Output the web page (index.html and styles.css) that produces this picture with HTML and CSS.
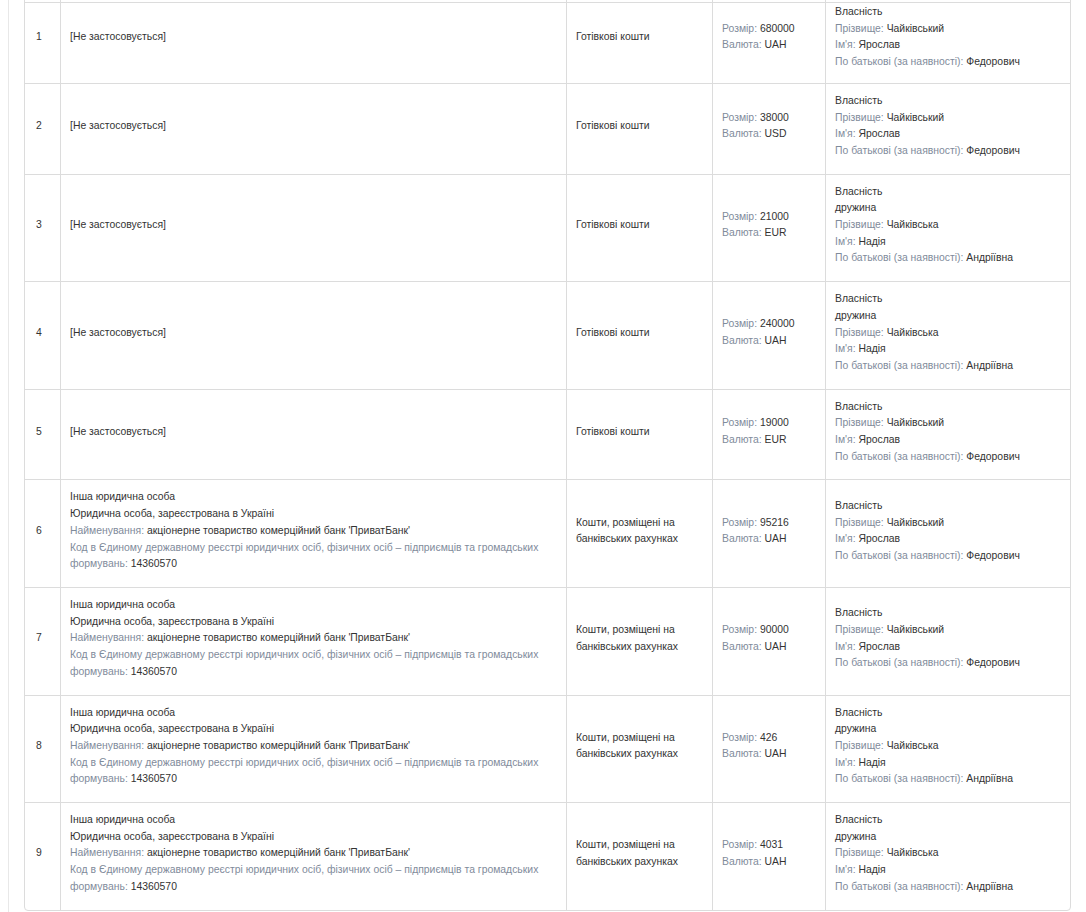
FILE: index.html
```html
<!DOCTYPE html>
<html lang="uk">
<head>
<meta charset="utf-8">
<title>Активи</title>
<link rel="stylesheet" href="styles.css">
</head>
<body>
<div class="card">
<table class="grid">
<colgroup>
<col class="c-num"><col class="c-org"><col class="c-type"><col class="c-sum"><col class="c-own">
</colgroup>
<thead>
<tr><th></th><th></th><th></th><th></th><th></th></tr>
</thead>
<tbody>
<tr class="first">
<td class="num">1</td>
<td>[Не застосовується]</td>
<td>Готівкові кошти</td>
<td><div><span class="lbl">Розмір:</span> 680000</div><div><span class="lbl">Валюта:</span> UAH</div></td>
<td><div>Власність</div><div><span class="lbl">Прізвище:</span> Чайківський</div><div><span class="lbl">Ім'я:</span> Ярослав</div><div><span class="lbl">По батькові (за наявності):</span> Федорович</div></td>
</tr>
<tr>
<td class="num">2</td>
<td>[Не застосовується]</td>
<td>Готівкові кошти</td>
<td><div><span class="lbl">Розмір:</span> 38000</div><div><span class="lbl">Валюта:</span> USD</div></td>
<td><div>Власність</div><div><span class="lbl">Прізвище:</span> Чайківський</div><div><span class="lbl">Ім'я:</span> Ярослав</div><div><span class="lbl">По батькові (за наявності):</span> Федорович</div></td>
</tr>
<tr>
<td class="num">3</td>
<td>[Не застосовується]</td>
<td>Готівкові кошти</td>
<td><div><span class="lbl">Розмір:</span> 21000</div><div><span class="lbl">Валюта:</span> EUR</div></td>
<td><div>Власність</div><div>дружина</div><div><span class="lbl">Прізвище:</span> Чайківська</div><div><span class="lbl">Ім'я:</span> Надія</div><div><span class="lbl">По батькові (за наявності):</span> Андріївна</div></td>
</tr>
<tr>
<td class="num">4</td>
<td>[Не застосовується]</td>
<td>Готівкові кошти</td>
<td><div><span class="lbl">Розмір:</span> 240000</div><div><span class="lbl">Валюта:</span> UAH</div></td>
<td><div>Власність</div><div>дружина</div><div><span class="lbl">Прізвище:</span> Чайківська</div><div><span class="lbl">Ім'я:</span> Надія</div><div><span class="lbl">По батькові (за наявності):</span> Андріївна</div></td>
</tr>
<tr>
<td class="num">5</td>
<td>[Не застосовується]</td>
<td>Готівкові кошти</td>
<td><div><span class="lbl">Розмір:</span> 19000</div><div><span class="lbl">Валюта:</span> EUR</div></td>
<td><div>Власність</div><div><span class="lbl">Прізвище:</span> Чайківський</div><div><span class="lbl">Ім'я:</span> Ярослав</div><div><span class="lbl">По батькові (за наявності):</span> Федорович</div></td>
</tr>
<tr>
<td class="num">6</td>
<td><div>Інша юридична особа</div><div>Юридична особа, зареєстрована в Україні</div><div><span class="lbl">Найменування:</span> акціонерне товариство комерційний банк 'ПриватБанк'</div><div><span class="lbl">Код в Єдиному державному реєстрі юридичних осіб, фізичних осіб – підприємців та громадських формувань:</span> 14360570</div></td>
<td>Кошти, розміщені на банківських рахунках</td>
<td><div><span class="lbl">Розмір:</span> 95216</div><div><span class="lbl">Валюта:</span> UAH</div></td>
<td><div>Власність</div><div><span class="lbl">Прізвище:</span> Чайківський</div><div><span class="lbl">Ім'я:</span> Ярослав</div><div><span class="lbl">По батькові (за наявності):</span> Федорович</div></td>
</tr>
<tr>
<td class="num">7</td>
<td><div>Інша юридична особа</div><div>Юридична особа, зареєстрована в Україні</div><div><span class="lbl">Найменування:</span> акціонерне товариство комерційний банк 'ПриватБанк'</div><div><span class="lbl">Код в Єдиному державному реєстрі юридичних осіб, фізичних осіб – підприємців та громадських формувань:</span> 14360570</div></td>
<td>Кошти, розміщені на банківських рахунках</td>
<td><div><span class="lbl">Розмір:</span> 90000</div><div><span class="lbl">Валюта:</span> UAH</div></td>
<td><div>Власність</div><div><span class="lbl">Прізвище:</span> Чайківський</div><div><span class="lbl">Ім'я:</span> Ярослав</div><div><span class="lbl">По батькові (за наявності):</span> Федорович</div></td>
</tr>
<tr>
<td class="num">8</td>
<td><div>Інша юридична особа</div><div>Юридична особа, зареєстрована в Україні</div><div><span class="lbl">Найменування:</span> акціонерне товариство комерційний банк 'ПриватБанк'</div><div><span class="lbl">Код в Єдиному державному реєстрі юридичних осіб, фізичних осіб – підприємців та громадських формувань:</span> 14360570</div></td>
<td>Кошти, розміщені на банківських рахунках</td>
<td><div><span class="lbl">Розмір:</span> 426</div><div><span class="lbl">Валюта:</span> UAH</div></td>
<td><div>Власність</div><div>дружина</div><div><span class="lbl">Прізвище:</span> Чайківська</div><div><span class="lbl">Ім'я:</span> Надія</div><div><span class="lbl">По батькові (за наявності):</span> Андріївна</div></td>
</tr>
<tr>
<td class="num">9</td>
<td><div>Інша юридична особа</div><div>Юридична особа, зареєстрована в Україні</div><div><span class="lbl">Найменування:</span> акціонерне товариство комерційний банк 'ПриватБанк'</div><div><span class="lbl">Код в Єдиному державному реєстрі юридичних осіб, фізичних осіб – підприємців та громадських формувань:</span> 14360570</div></td>
<td>Кошти, розміщені на банківських рахунках</td>
<td><div><span class="lbl">Розмір:</span> 4031</div><div><span class="lbl">Валюта:</span> UAH</div></td>
<td><div>Власність</div><div>дружина</div><div><span class="lbl">Прізвище:</span> Чайківська</div><div><span class="lbl">Ім'я:</span> Надія</div><div><span class="lbl">По батькові (за наявності):</span> Андріївна</div></td>
</tr>
</tbody>
</table>
</div>
</body>
</html>
```
FILE: styles.css
```css
html, body {
  margin: 0;
  padding: 0;
  background: #fff;
  overflow: hidden;
}
body {
  font-family: "Liberation Sans", Arial, sans-serif;
  font-size: 10.4px;
  line-height: 16.7px;
  color: #333;
}
.card {
  margin-left: 8px;
  border-left: 1px solid #e8e8e8;
  padding-left: 15px;
  padding-bottom: 20px;
}
.grid {
  width: 1047px;
  margin-top: -10px;
  border-collapse: separate;
  border-spacing: 0;
  border: 1px solid #dcdcdc;
  border-radius: 0 0 4px 4px;
  table-layout: fixed;
}
.c-num { width: 35px; }
.c-org { width: 506px; }
.c-type { width: 146px; }
.c-sum { width: 113px; }
.c-own { width: auto; }
.grid th {
  padding: 11px 0 0;
  height: 0;
  line-height: 0;
  border-left: 1px solid #dcdcdc;
}
.grid td {
  padding: 9px 9px 14px;
  vertical-align: middle;
  text-align: left;
  border-top: 1px solid #dcdcdc;
  border-left: 1px solid #dcdcdc;
}
.grid th:first-child,
.grid td:first-child {
  border-left: 0;
}
.grid td.num {
  padding-left: 11px;
}
.grid tr.first td {
  padding-top: 1px;
  padding-bottom: 12px;
}
.num {
  color: #333;
}
.lbl {
  color: #7f8b9b;
}
```
